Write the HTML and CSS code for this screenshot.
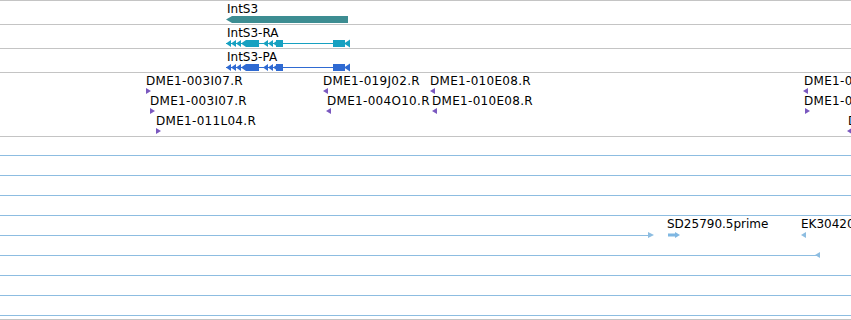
FILE: index.html
```html
<!DOCTYPE html>
<html lang="en">
<head>
<meta charset="UTF-8" />
<title>Tracks</title>
<link rel="stylesheet" href="styles.css">
</head>
<body>
  <div class="view">
    <!-- gene -->
    <div class="track track-top">
      <span class="label" style="left:227px;top:1px">IntS3</span>
      <svg class="glyph" style="left:225px;top:14px" width="126" height="9" viewBox="0 0 126 9">
        <polygon class="gene" points="1,4.5 7,1 123,1 123,8 7,8" />
      </svg>
    </div>

    <!-- transcripts -->
    <div class="track">
      <span class="label" style="left:227px;top:1px">IntS3-RA</span>
      <svg class="glyph rna" style="left:225px;top:14px" width="126" height="9" viewBox="0 0 126 9">
        <rect x="1" y="4" width="123" height="1" />
        <polygon points="1,4.5 6,1 6,8" />
        <polygon points="6,4.5 11,1 11,8" />
        <polygon points="11,4.5 16,1 16,8" />
        <polygon points="16,4.5 21,1 21,8" />
        <rect x="21" y="1" width="13" height="7" />
        <polygon points="38,4.5 43,1 43,8" />
        <polygon points="43,4.5 48,1 48,8" />
        <polygon points="48,4.5 53,1 53,8" />
        <rect x="51" y="1" width="7" height="7" />
        <rect x="108" y="1" width="12" height="7" />
        <polygon points="119,4.5 125,0.5 125,8.5" />
      </svg>
    </div>

    <div class="track">
      <span class="label" style="left:227px;top:1px">IntS3-PA</span>
      <svg class="glyph cds" style="left:225px;top:14px" width="126" height="9" viewBox="0 0 126 9">
        <rect x="1" y="4" width="123" height="1" />
        <polygon points="1,4.5 6,1 6,8" />
        <polygon points="6,4.5 11,1 11,8" />
        <polygon points="11,4.5 16,1 16,8" />
        <polygon points="16,4.5 21,1 21,8" />
        <rect x="21" y="1" width="13" height="7" />
        <polygon points="38,4.5 43,1 43,8" />
        <polygon points="43,4.5 48,1 48,8" />
        <polygon points="48,4.5 53,1 53,8" />
        <rect x="51" y="1" width="7" height="7" />
        <rect x="108" y="1" width="12" height="7" />
        <polygon points="119,4.5 125,0.5 125,8.5" />
      </svg>
    </div>

    <!-- clone ends -->
    <div class="track track-clones">
      <span class="label clone" style="left:146px;top:1px">DME1-003I07.R</span>
      <span class="tri tri-right" style="left:146px;top:15px"></span>
      <span class="label clone" style="left:150px;top:21px">DME1-003I07.R</span>
      <span class="tri tri-right" style="left:150px;top:35px"></span>
      <span class="label clone" style="left:156px;top:41px">DME1-011L04.R</span>
      <span class="tri tri-right" style="left:156px;top:55px"></span>

      <span class="label clone" style="left:323px;top:1px">DME1-019J02.R</span>
      <span class="tri tri-left" style="left:323px;top:15px"></span>
      <span class="label clone" style="left:327px;top:21px">DME1-004O10.R</span>
      <span class="tri tri-left" style="left:326px;top:35px"></span>

      <span class="label clone" style="left:430px;top:1px">DME1-010E08.R</span>
      <span class="tri tri-left" style="left:430px;top:15px"></span>
      <span class="label clone" style="left:432px;top:21px">DME1-010E08.R</span>
      <span class="tri tri-left" style="left:432px;top:35px"></span>

      <span class="label clone" style="left:804px;top:1px">DME1-010E08.R</span>
      <span class="tri tri-left" style="left:803px;top:15px"></span>
      <span class="label clone" style="left:804px;top:21px">DME1-003I07.R</span>
      <span class="tri tri-right" style="left:805px;top:35px"></span>
      <span class="label clone" style="left:848px;top:41px">DME1-011L04.R</span>
      <span class="tri tri-left" style="left:847px;top:55px"></span>
    </div>

    <!-- ESTs -->
    <div class="track track-est">
      <div class="row"><span class="span"></span></div>
      <div class="row"><span class="span"></span></div>
      <div class="row"><span class="span"></span></div>
      <div class="row"><span class="span"></span></div>
      <div class="row">
        <span class="span" style="width:649px"></span>
        <span class="arrow arrow-right" style="left:648px"></span>
      </div>
      <div class="row">
        <span class="span" style="width:817px"></span>
        <span class="arrow arrow-left" style="left:815px"></span>
      </div>
      <div class="row"><span class="span"></span></div>
      <div class="row"><span class="span"></span></div>
      <div class="row"><span class="span"></span></div>

      <span class="label" style="left:667px;top:80px">SD25790.5prime</span>
      <svg class="glyph est" style="left:668px;top:95px" width="13" height="6" viewBox="0 0 13 6">
        <rect x="0" y="1.5" width="8" height="3" />
        <polygon points="7,0 12,3 7,6" />
      </svg>
      <span class="label" style="left:801px;top:80px">EK304201.complete</span>
      <span class="arrow arrow-left" style="left:801px;top:95px"></span>
    </div>
  </div>
</body>
</html>
```

FILE: styles.css
```css
body {
  margin: 0;
  background-color: #fff;
  font-family: 'DejaVu Sans', sans-serif;
  font-size: 12px;
  color: #000;
}
.view {
  width: 851px;
  overflow: hidden;
}
.track {
  position: relative;
  height: 23px;
  border-bottom: 1px solid #c4c4c4;
  overflow: hidden;
}
.track-top {
  border-top: 1px solid #c4c4c4;
}
.track-clones {
  height: 63px;
}
.track-est {
  padding-top: 18px;
  box-sizing: border-box;
  height: 183px;
}
.label {
  position: absolute;
  white-space: nowrap;
  line-height: 14px;
}
.clone {
  letter-spacing: 0.3px;
}
.glyph {
  position: absolute;
  display: block;
}
.gene {
  fill: #3d8d92;
}
.rna {
  fill: #17a1c1;
}
.cds {
  fill: #2f6ad2;
}
.est {
  fill: #7fb7e2;
}
.tri {
  position: absolute;
  width: 0;
  height: 0;
  border-top: 3px solid transparent;
  border-bottom: 3px solid transparent;
}
.tri-right {
  border-left: 5px solid #7a58bf;
}
.tri-left {
  border-right: 5px solid #7a58bf;
}
.row {
  position: relative;
  height: 20px;
}
.span {
  display: block;
  height: 1px;
  background-color: #8dbde1;
}
.arrow {
  position: absolute;
  top: -3px;
  width: 0;
  height: 0;
  border-top: 3px solid transparent;
  border-bottom: 3px solid transparent;
}
.arrow-right {
  border-left: 6px solid #8dbde1;
}
.arrow-left {
  border-right: 5px solid #8dbde1;
}
```
